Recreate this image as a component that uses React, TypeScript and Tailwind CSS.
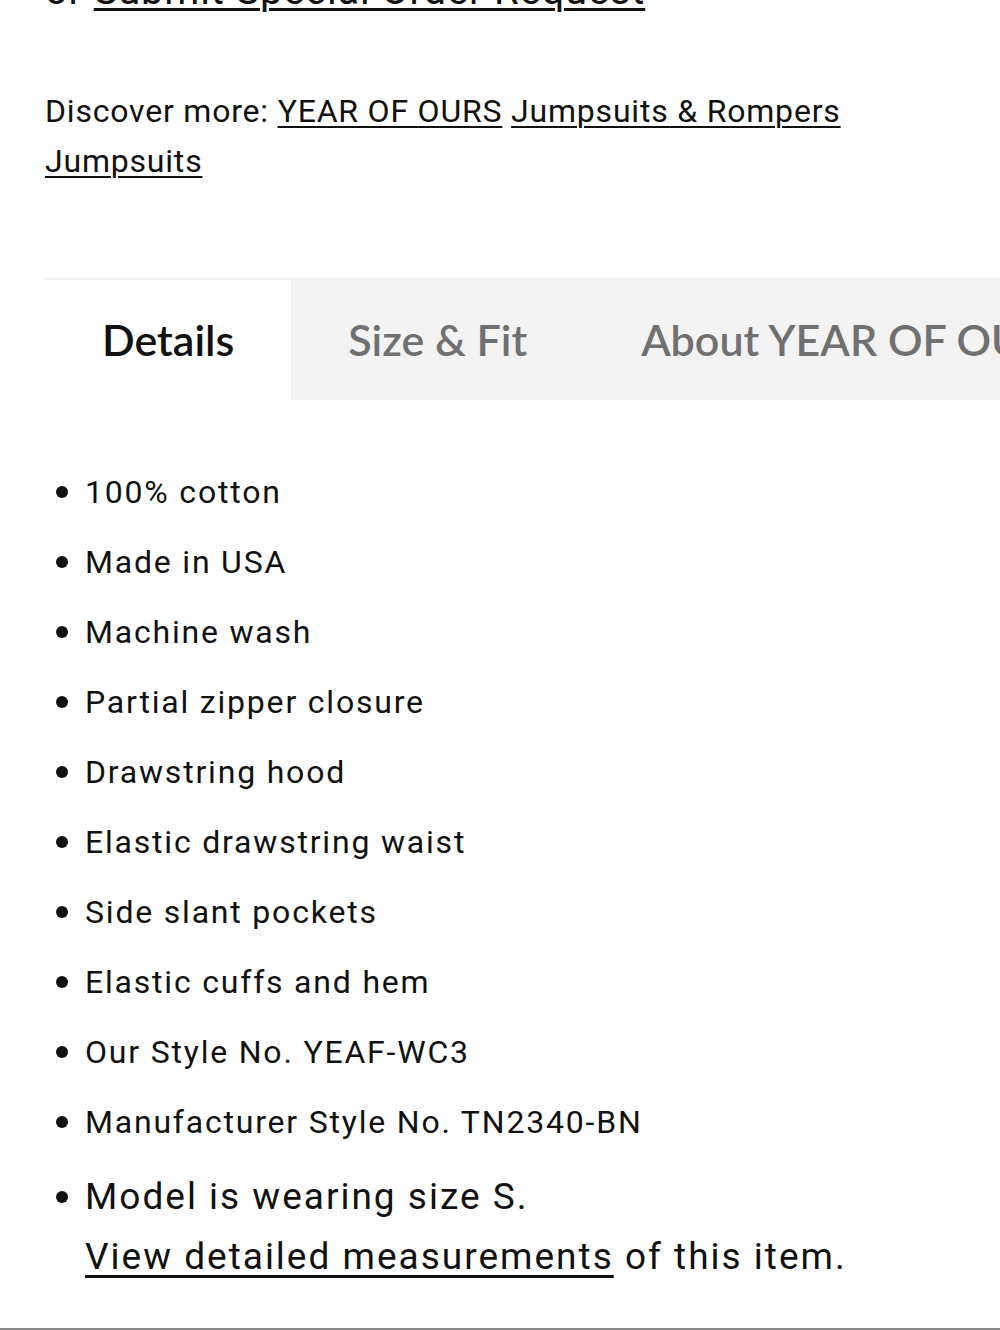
import React from "react";

const items = [
  "100% cotton",
  "Made in USA",
  "Machine wash",
  "Partial zipper closure",
  "Drawstring hood",
  "Elastic drawstring waist",
  "Side slant pockets",
  "Elastic cuffs and hem",
  "Our Style No. YEAF-WC3",
  "Manufacturer Style No. TN2340-BN",
];

export default function App() {
  return (
    <div className="w-[1000px] h-[1330px] overflow-hidden bg-white text-[#111] relative" style={{ fontFamily: "Roboto, sans-serif" }}>
      <div className="px-[45px]">
        <p className="mt-[-34px] h-[50px] text-[40px] leading-[50px] tracking-[0.8px] whitespace-nowrap">
          or <a className="underline decoration-[3px] underline-offset-4">Submit Special Order Request</a>
        </p>
        <p className="mt-[70px] text-[32px] leading-[50px] tracking-[0.8px]">
          Discover more: <a className="underline decoration-2 underline-offset-4">YEAR OF OURS</a>{" "}
          <a className="underline decoration-2 underline-offset-4">Jumpsuits &amp; Rompers</a>{" "}
          <a className="underline decoration-2 underline-offset-4">Jumpsuits</a>
        </p>
      </div>
      <div className="ml-[45px] mt-[92px] border-t-2 border-[#f2f2f2] flex h-[122px] whitespace-nowrap" style={{ fontFamily: "Lato, sans-serif" }}>
        <div className="bg-white px-[57px] flex items-center text-[43px] font-semibold text-[#111]">Details</div>
        <div className="flex-1 bg-[#f3f3f3] flex items-center text-[43px] font-semibold text-[#707070]">
          <div className="px-[57px]">Size &amp; Fit</div>
          <div className="px-[57px]">About YEAR OF OURS</div>
        </div>
      </div>
      <ul className="mt-[57px] pl-[56px]">
        {items.map((t) => (
          <li key={t} className="flex items-center h-[70px] text-[32px] tracking-[1.8px]">
            <span className="w-[12px] h-[12px] rounded-full bg-[#111] mr-[17px] shrink-0" />
            <span>{t}</span>
          </li>
        ))}
        <li className="flex items-start pt-[10px] text-[37px] leading-[60px] tracking-[2px]">
          <span className="w-[12px] h-[12px] rounded-full bg-[#111] mr-[17px] mt-[24px] shrink-0" />
          <span>
            Model is wearing size S.
            <br />
            <a className="underline decoration-[3px] underline-offset-[6px]">View detailed measurements</a> of this item.
          </span>
        </li>
      </ul>
      <div className="absolute left-0 right-0 bottom-0 h-[2px] bg-[#888]" />
    </div>
  );
}
